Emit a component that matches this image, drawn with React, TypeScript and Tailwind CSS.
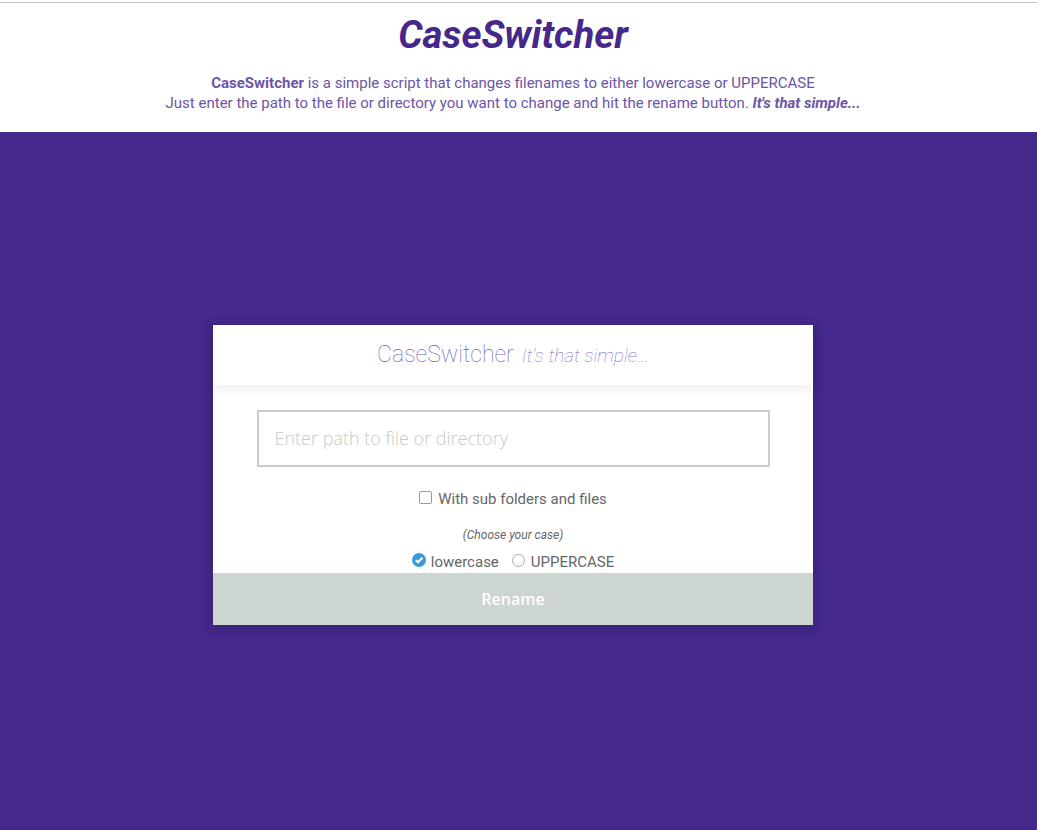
import React from "react"

const App = () => {
  return (
    <div className="min-h-[830px] flex flex-col bg-[#45288b] pr-[11px]" style={{ fontFamily: "Roboto, sans-serif" }}>
      <header className="bg-white pt-[2px] h-[132px] -mr-[11px] pr-[11px]">
        <div className="h-px bg-[#c4c4c4] -mr-[11px]" />
        <h1 className="text-center font-bold italic text-[38.3px] leading-[44px] mt-[10px] text-[#45288a]">
          CaseSwitcher
        </h1>
        <p className="text-center text-[15px] leading-[20px] mt-[16px] text-[#6c55a6]">
          <b className="font-bold">CaseSwitcher</b> is a simple script that changes filenames to either lowercase or UPPERCASE
          <br />
          Just enter the path to the file or directory you want to change and hit the rename button.{" "}
          <b className="font-bold italic">It's that simple...</b>
        </p>
      </header>

      <main className="flex justify-center pt-[193px]">
        <div className="w-[600px] bg-white shadow-[0_2px_10px_rgba(0,0,0,0.25)]">
          <div className="h-[60px] flex items-center justify-center gap-[8px] shadow-[0_6px_10px_rgba(0,0,0,0.06)]">
            <span className="font-thin text-[23px] text-[#6f5cc0]">CaseSwitcher</span>
            <span className="font-thin italic text-[19px] text-[#7d6ac8] mt-[3px]">It's that simple...</span>
          </div>
          <div className="flex flex-col items-center pt-[25px]">
            <div className="w-[513px] h-[57px] border-2 border-[#cccccc] flex items-center pl-[16px]">
              <input
                autoFocus
                placeholder="Enter path to file or directory"
                className="w-full outline-none text-[18px] font-light placeholder:text-[#c9c9c9] text-[#555] caret-[#555]"
                style={{ fontFamily: "'Open Sans', sans-serif" }}
              />
            </div>
            <label className="flex items-center gap-[6px] mt-[21px] text-[15px] text-[#666]">
              <span className="w-[13px] h-[13px] border border-[#999] rounded-[2px] bg-white mb-[3px]" />
              With sub folders and files
            </label>
            <p className="italic text-[12px] text-[#666] mt-[15px]">(Choose your case)</p>
            <div className="flex items-center text-[15px] text-[#666] mt-[7px] leading-[22px]">
              <svg width="14" height="14" viewBox="0 0 14 14" className="mr-[5px] mb-[3px]">
                <circle cx="7" cy="7" r="7" fill="#3d9ad8" />
                <path d="M3.8 7.2 L6 9.3 L10.3 4.8" stroke="#fff" strokeWidth="2" fill="none" />
              </svg>
              lowercase
              <span className="w-[13px] h-[13px] rounded-full border border-[#aaa] ml-[13px] mr-[6px] mb-[3px]" />
              UPPERCASE
            </div>
          </div>
          <button
            className="w-full h-[52px] bg-[#ccd5d0] text-white text-[16px] font-semibold"
            style={{ fontFamily: "'Open Sans', sans-serif" }}
          >
            Rename
          </button>
        </div>
      </main>
    </div>
  )
}

export default App
